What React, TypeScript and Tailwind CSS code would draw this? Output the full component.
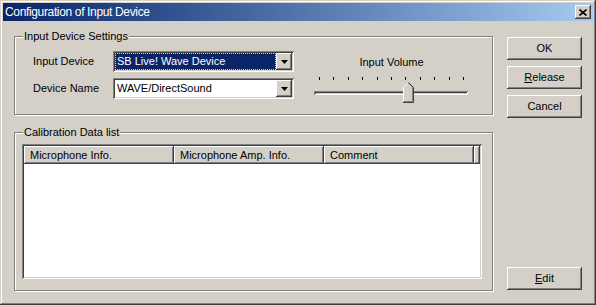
import React from "react";

const raised =
  "bg-[#d4d0c8] shadow-[inset_-1px_-1px_0_#404040,inset_1px_1px_0_#ffffff,inset_-2px_-2px_0_#808080,inset_2px_2px_0_#d4d0c8]";
const sunken =
  "shadow-[inset_1px_1px_0_#808080,inset_-1px_-1px_0_#ffffff,inset_2px_2px_0_#404040,inset_-2px_-2px_0_#d4d0c8]";

function DropArrow() {
  return (
    <div className={`w-[16px] h-[17px] flex items-center justify-center shrink-0 ${raised}`}>
      <svg width="7" height="4" viewBox="0 0 7 4">
        <polygon points="0,0 7,0 3.5,4" fill="#000" />
      </svg>
    </div>
  );
}

function Combo({ value, selected }: { value: string; selected?: boolean }) {
  return (
    <div className={`w-[181px] h-[21px] bg-white flex p-[2px] ${sunken}`}>
      {selected ? (
        <div className="flex-1 flex items-center pl-[1px] bg-[#0a246a] text-white border border-dotted border-[#e8d890]">
          {value}
        </div>
      ) : (
        <div className="flex-1 flex items-center pl-[2px] text-black">{value}</div>
      )}
      <DropArrow />
    </div>
  );
}

function GroupBox({ label, className, children }: { label: string; className: string; children: React.ReactNode }) {
  return (
    <div
      className={`relative w-[479px] border border-[#808080] shadow-[inset_1px_1px_0_#ffffff,1px_1px_0_#ffffff] ${className}`}
    >
      <span className="absolute -top-[7px] left-[8px] px-[1px] bg-[#d4d0c8] leading-[13px]">{label}</span>
      {children}
    </div>
  );
}

function Button({ children, className = "" }: { children: React.ReactNode; className?: string }) {
  return (
    <div className={`w-[75px] h-[23px] flex items-center justify-center ${raised} ${className}`}>{children}</div>
  );
}

function HeaderCell({ label, width }: { label: string; width: string }) {
  return (
    <div className={`${width} h-full flex items-center pl-[6px] shrink-0 ${raised}`}>{label}</div>
  );
}

export default function App() {
  const ticks = Array.from({ length: 11 });
  return (
    <div
      className="w-[596px] h-[305px] bg-[#d4d0c8] p-[3px] flex flex-col text-[11px] text-black shadow-[inset_-1px_-1px_0_#404040,inset_1px_1px_0_#d4d0c8,inset_-2px_-2px_0_#808080,inset_2px_2px_0_#ffffff]"
      style={{ fontFamily: '"Liberation Sans", Arial, sans-serif' }}
    >
      {/* Title bar */}
      <div className="h-[18px] flex items-center bg-gradient-to-r from-[#0a246a] to-[#a6caf0] pl-[2px] pr-[2px]">
        <span className="flex-1 text-white text-[12px] tracking-[-0.35px]">Configuration of Input Device</span>
        <div className={`w-[16px] h-[14px] flex items-center justify-center ${raised}`}>
          <svg width="8" height="7" viewBox="0 0 8 7">
            <path d="M0.5 0.5 L7.5 6.5 M7.5 0.5 L0.5 6.5" stroke="#000" strokeWidth="1.6" />
          </svg>
        </div>
      </div>

      {/* Body */}
      <div className="flex flex-1">
        <div className="ml-[11px] mt-[15px] flex flex-col">
          {/* Input Device Settings */}
          <GroupBox label="Input Device Settings" className="h-[79px]">
            <div className="flex items-start pl-[18px] pt-[14px]">
              <div className="flex flex-col gap-[6px]">
                <div className="flex items-center">
                  <span className="w-[80px]">Input Device</span>
                  <Combo value="SB Live! Wave Device" selected />
                </div>
                <div className="flex items-center">
                  <span className="w-[80px]">Device Name</span>
                  <Combo value="WAVE/DirectSound" />
                </div>
              </div>

              {/* Volume slider */}
              <div className="ml-[20px] mt-[5px] w-[154px] flex flex-col">
                <span className="text-center leading-[13px] pl-[1px]">Input Volume</span>
                <div className="mt-[8px] pl-[5px] pr-[4px] flex justify-between">
                  {ticks.map((_, i) => (
                    <span key={i} className="w-[1px] h-[3px] bg-black" />
                  ))}
                </div>
                <div className="relative mt-[11px]">
                  <div className={`h-[4px] bg-[#d4d0c8] ${sunken}`} />
                  <svg
                    className="absolute left-[89px] -top-[9px]"
                    width="11"
                    height="21"
                    viewBox="0 0 11 21"
                  >
                    <polygon points="0,5 5,0 10,5 10,20 0,20" fill="#d4d0c8" />
                    <polyline points="0.5,20 0.5,5.2 5,0.7" fill="none" stroke="#fff" />
                    <polyline points="5,0.7 9.5,5.2 9.5,19.5 0.5,19.5" fill="none" stroke="#808080" />
                    <polyline points="5.5,0.5 10.5,5.5 10.5,20.5 0,20.5" fill="none" stroke="#404040" />
                  </svg>
                </div>
              </div>
            </div>
          </GroupBox>

          {/* Calibration Data list */}
          <GroupBox label="Calibration Data list" className="h-[159px] mt-[17px]">
            <div className="pl-[7px] pt-[11px]">
              <div className={`w-[460px] h-[135px] bg-white p-[2px] ${sunken}`}>
                <div className="h-[18px] flex">
                  <HeaderCell label="Microphone Info." width="w-[150px]" />
                  <HeaderCell label="Microphone Amp. Info." width="w-[150px]" />
                  <HeaderCell label="Comment" width="w-[150px]" />
                  <div className={`flex-1 h-full ${raised}`} />
                </div>
              </div>
            </div>
          </GroupBox>
        </div>

        {/* Buttons */}
        <div className="ml-[14px] mt-[16px] flex flex-col gap-[6px]">
          <Button className="shadow-[inset_-1px_-1px_0_#000000,inset_1px_1px_0_#ffffff,inset_-2px_-2px_0_#808080,inset_2px_2px_0_#d4d0c8]">
            OK
          </Button>
          <Button>
            <span>
              <span className="underline">R</span>elease
            </span>
          </Button>
          <Button>Cancel</Button>
          <Button className="mt-[143px]">
            <span>
              <span className="underline">E</span>dit
            </span>
          </Button>
        </div>
      </div>
    </div>
  );
}
